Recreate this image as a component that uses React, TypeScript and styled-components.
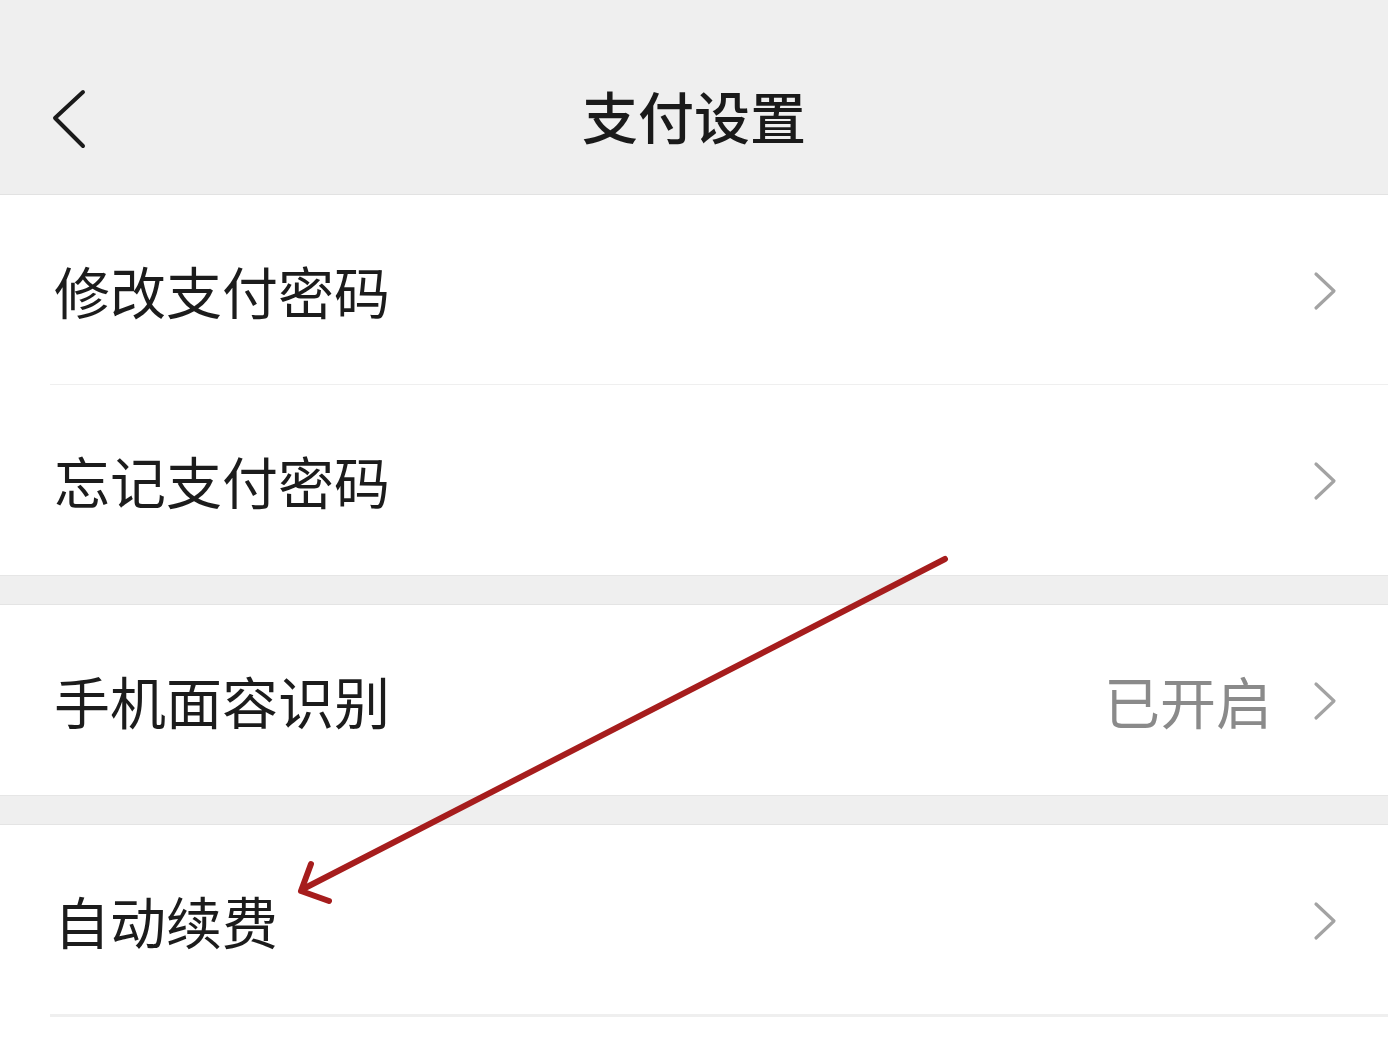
import styled, { createGlobalStyle } from 'styled-components';

const GlobalStyle = createGlobalStyle`
  html, body {
    margin: 0;
    padding: 0;
    background: #ffffff;
  }
  body {
    font-family: "Noto Sans CJK SC", "Noto Sans", sans-serif;
    color: #1c1c1c;
  }
`;

const Page = styled.div`
  position: relative;
  width: 1388px;
  height: 1044px;
  overflow: hidden;
  background: #fff;
`;

const Header = styled.header`
  position: relative;
  height: 194px;
  background: #efefef;
  border-bottom: 1px solid #e2e2e2;
  display: flex;
  align-items: center;
  justify-content: center;
`;

const BackButton = styled.div`
  position: absolute;
  left: 50px;
  top: 88px;
  width: 40px;
  height: 64px;
`;

const Title = styled.h1`
  margin: 36px 0 0;
  font-size: 56px;
  font-weight: 500;
  line-height: 1;
  color: #1a1a1a;
`;

const Row = styled.div<{ $height: number; $divider?: boolean }>`
  position: relative;
  height: ${(p) => p.$height}px;
  display: flex;
  align-items: center;
  padding: 0 50px 0 54px;
  background: #fff;
  &::after {
    content: '';
    display: ${(p) => (p.$divider ? 'block' : 'none')};
    position: absolute;
    left: 50px;
    right: 0;
    bottom: -2px;
    height: 3px;
    background: #efefef;
  }
`;

const Label = styled.span`
  flex: 1;
  font-size: 56px;
  line-height: 1;
  color: #1c1c1c;
`;

const Value = styled.span`
  font-size: 56px;
  line-height: 1;
  color: #8a8a8a;
  margin-right: 40px;
`;

const Gap = styled.div`
  height: 28px;
  background: #efefef;
  border-top: 1px solid #e6e6e6;
  border-bottom: 1px solid #e4e4e4;
`;

const Annotation = styled.svg`
  position: absolute;
  left: 0;
  top: 0;
  pointer-events: none;
`;

const Chevron = () => (
  <svg width="26" height="40" viewBox="0 0 26 40" style={{ marginTop: 2 }}>
    <path d="M4 3 L22 20 L4 37" fill="none" stroke="#a3a3a3" strokeWidth="3.2" strokeLinecap="round" strokeLinejoin="round" />
  </svg>
);

export default function App() {
  return (
    <Page>
      <GlobalStyle />
      <Header>
        <BackButton>
          <svg width="40" height="64" viewBox="0 0 40 64">
            <path d="M33 4 L5 30 L33 58" fill="none" stroke="#1a1a1a" strokeWidth="4" strokeLinecap="round" strokeLinejoin="round" />
          </svg>
        </BackButton>
        <Title>支付设置</Title>
      </Header>
      <Row $height={190} $divider>
        <Label>修改支付密码</Label>
        <Chevron />
      </Row>
      <Row $height={190}>
        <Label>忘记支付密码</Label>
        <Chevron />
      </Row>
      <Gap />
      <Row $height={190}>
        <Label>手机面容识别</Label>
        <Value>已开启</Value>
        <Chevron />
      </Row>
      <Gap />
      <Row $height={190} $divider>
        <Label>自动续费</Label>
        <Chevron />
      </Row>
      <Annotation width="1388" height="1044" viewBox="0 0 1388 1044">
        <g fill="none" stroke="#a61d1d" strokeWidth="6" strokeLinecap="round" strokeLinejoin="round">
          <path d="M945 559 L303 889" />
          <path d="M311 864 L301 891 L329 901" />
        </g>
      </Annotation>
    </Page>
  );
}
